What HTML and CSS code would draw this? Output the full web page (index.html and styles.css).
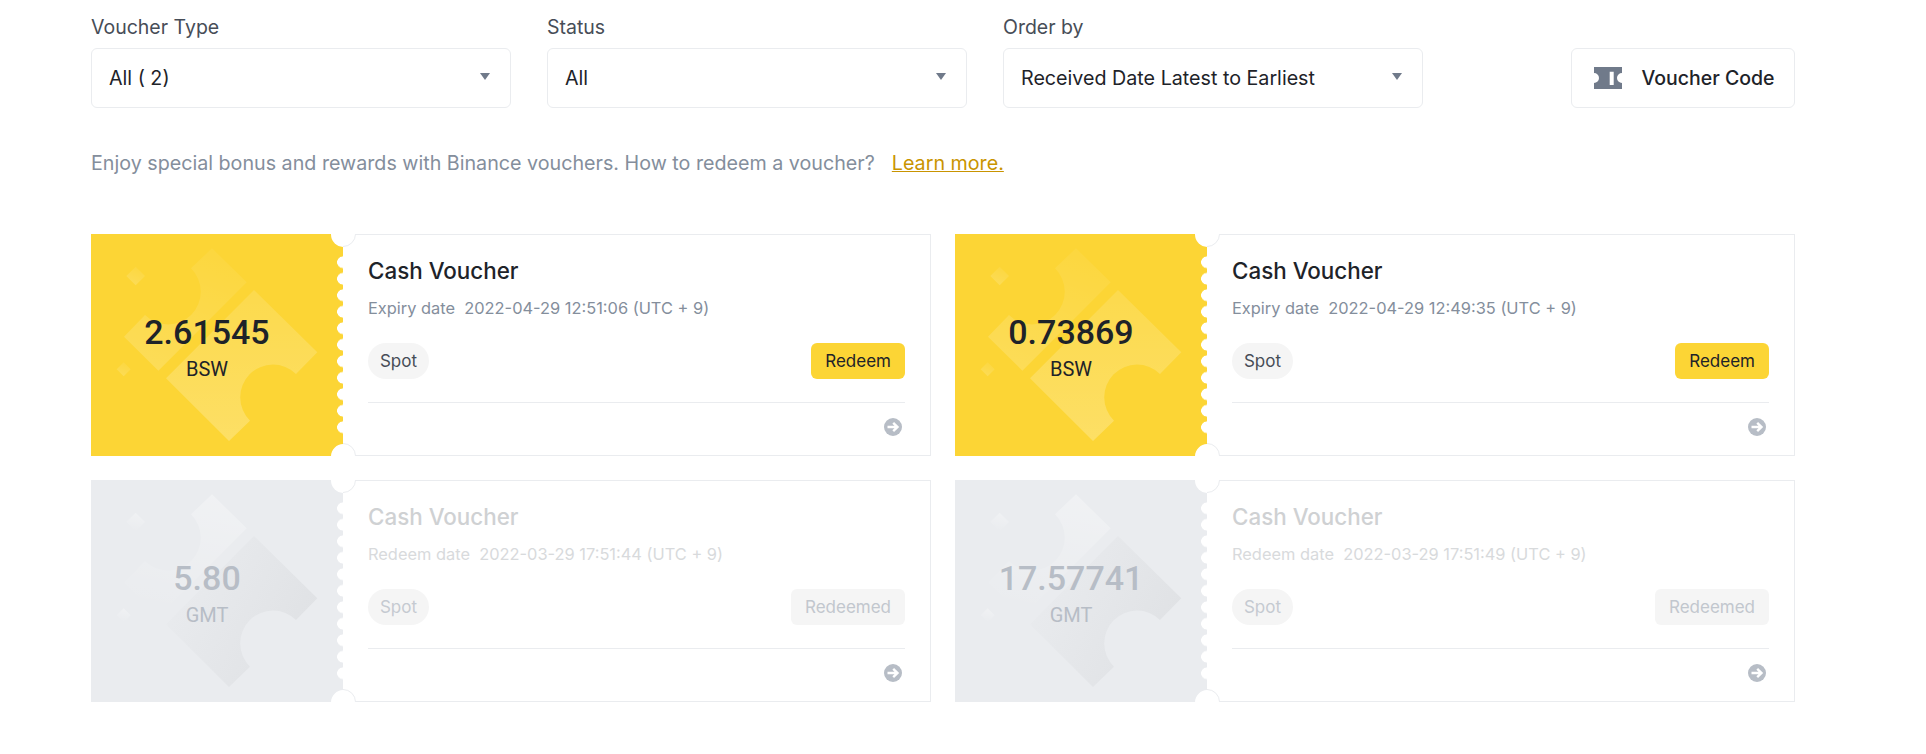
FILE: index.html
```html
<!DOCTYPE html>
<html lang="en">
<head>
<meta charset="utf-8">
<title>Vouchers</title>
<link rel="stylesheet" href="styles.css">
</head>
<body>
<svg class="defs" width="0" height="0" aria-hidden="true">
  <defs>
    <linearGradient id="gold-a" x1="0.7" y1="0" x2="0.3" y2="1"><stop offset="0" stop-color="#fff" stop-opacity=".05"/><stop offset="1" stop-color="#fff" stop-opacity=".17"/></linearGradient>
    <linearGradient id="gold-b" x1="0.5" y1="0" x2="0.5" y2="1"><stop offset="0" stop-color="#fff" stop-opacity=".12"/><stop offset="1" stop-color="#fff" stop-opacity=".24"/></linearGradient>
    <linearGradient id="grey-a" x1="0.7" y1="0" x2="0.5" y2="1"><stop offset="0" stop-color="#fff" stop-opacity=".3"/><stop offset="1" stop-color="#fff" stop-opacity="0"/></linearGradient>
    <linearGradient id="grey-b" x1="0" y1="0.2" x2="1" y2="0.7"><stop offset="0" stop-color="#dfe1e4" stop-opacity="0"/><stop offset="1" stop-color="#dfe1e4" stop-opacity="1"/></linearGradient>
    <symbol id="shapes" viewBox="0 0 252 222">
      <path class="shape-a" d="M121 14.3 L155.700 48.300 L67.400 136.700 L33 102.700 L54 81 A32 32 0 1 0 100 34.300 Z"/>
      <path class="shape-b" d="M163 56 L226.300 118.300 L205 140 A32.400 32.400 0 1 0 159 186.700 L138 207 L75 144.300 Z"/>
      <path class="shape-a" d="M44.700 32.700 L54 42 L44.700 51.300 L35.300 42 Z"/>
      <path class="shape-a" d="M32.700 128.300 L39.700 135.300 L32.700 142.300 L25.700 135.300 Z"/>
    </symbol>
  </defs>
</svg>
<main class="page">
  <section class="filters">
    <div class="field">
      <div class="field-label">Voucher Type</div>
      <div class="select"><span>All ( 2)</span><i class="caret"></i></div>
    </div>
    <div class="field">
      <div class="field-label">Status</div>
      <div class="select"><span>All</span><i class="caret"></i></div>
    </div>
    <div class="field">
      <div class="field-label">Order by</div>
      <div class="select"><span>Received Date Latest to Earliest</span><i class="caret"></i></div>
    </div>
    <button class="code-btn">
      <svg class="code-icon" viewBox="0 0 28 22"><path d="M0 0H28V6A5 5 0 0 0 28 16V22H0V16A5 5 0 0 0 0 6Z M15.700 4.700V18H19.700V4.700Z" fill-rule="evenodd"/></svg>
      <span>Voucher Code</span>
    </button>
  </section>
  <p class="intro">Enjoy special bonus and rewards with Binance vouchers. How to redeem a voucher?<a class="learn" href="#">Learn more.</a></p>
  <section class="grid">
    <article class="card">
      <div class="stub">
        <svg class="stub-art"><use href="#shapes"/></svg>
        <i class="perf"></i><i class="bite bite-t"></i><i class="bite bite-b"></i>
        <div class="amount">2.61545</div><div class="coin">BSW</div>
      </div>
      <div class="body">
        <i class="ring ring-t"></i><i class="ring ring-b"></i>
        <h3 class="title">Cash Voucher</h3>
        <div class="date">Expiry date&nbsp; 2022-04-29 12:51:06 (UTC + 9)</div>
        <div class="row"><span class="pill">Spot</span><button class="action">Redeem</button></div>
        <div class="foot"><svg class="arrow" viewBox="0 0 18 18"><circle cx="9" cy="9" r="9"/><path class="arrow-line" d="M3.500 9H13M9.200 4.800L13.500 9L9.200 13.200"/></svg></div>
      </div>
    </article>
    <article class="card">
      <div class="stub">
        <svg class="stub-art"><use href="#shapes"/></svg>
        <i class="perf"></i><i class="bite bite-t"></i><i class="bite bite-b"></i>
        <div class="amount">0.73869</div><div class="coin">BSW</div>
      </div>
      <div class="body">
        <i class="ring ring-t"></i><i class="ring ring-b"></i>
        <h3 class="title">Cash Voucher</h3>
        <div class="date">Expiry date&nbsp; 2022-04-29 12:49:35 (UTC + 9)</div>
        <div class="row"><span class="pill">Spot</span><button class="action">Redeem</button></div>
        <div class="foot"><svg class="arrow" viewBox="0 0 18 18"><circle cx="9" cy="9" r="9"/><path class="arrow-line" d="M3.500 9H13M9.200 4.800L13.500 9L9.200 13.200"/></svg></div>
      </div>
    </article>
    <article class="card used">
      <div class="stub">
        <svg class="stub-art"><use href="#shapes"/></svg>
        <i class="perf"></i><i class="bite bite-t"></i><i class="bite bite-b"></i>
        <div class="amount">5.80</div><div class="coin">GMT</div>
      </div>
      <div class="body">
        <i class="ring ring-t"></i><i class="ring ring-b"></i>
        <h3 class="title">Cash Voucher</h3>
        <div class="date">Redeem date&nbsp; 2022-03-29 17:51:44 (UTC + 9)</div>
        <div class="row"><span class="pill">Spot</span><button class="action">Redeemed</button></div>
        <div class="foot"><svg class="arrow" viewBox="0 0 18 18"><circle cx="9" cy="9" r="9"/><path class="arrow-line" d="M3.500 9H13M9.200 4.800L13.500 9L9.200 13.200"/></svg></div>
      </div>
    </article>
    <article class="card used">
      <div class="stub">
        <svg class="stub-art"><use href="#shapes"/></svg>
        <i class="perf"></i><i class="bite bite-t"></i><i class="bite bite-b"></i>
        <div class="amount">17.57741</div><div class="coin">GMT</div>
      </div>
      <div class="body">
        <i class="ring ring-t"></i><i class="ring ring-b"></i>
        <h3 class="title">Cash Voucher</h3>
        <div class="date">Redeem date&nbsp; 2022-03-29 17:51:49 (UTC + 9)</div>
        <div class="row"><span class="pill">Spot</span><button class="action">Redeemed</button></div>
        <div class="foot"><svg class="arrow" viewBox="0 0 18 18"><circle cx="9" cy="9" r="9"/><path class="arrow-line" d="M3.500 9H13M9.200 4.800L13.500 9L9.200 13.200"/></svg></div>
      </div>
    </article>
  </section>
</main>
</body>
</html>
```

FILE: styles.css
```css
* { box-sizing: border-box; }
html, body { margin: 0; background: #fff; }
body { font-family: Inter, "Noto Sans", sans-serif; color: #1e2329; overflow: hidden; }
.defs { position: absolute; }
.page { width: 1704px; margin-left: 91px; padding-top: 15px; }

.filters { display: flex; gap: 36px; align-items: flex-end; }
.field { width: 420px; }
.field-label { font-size: 19.500px; line-height: 24px; color: #474d57; margin-bottom: 9px; }
.select { height: 60px; border: 1px solid #eaecef; border-radius: 6px; padding: 0 20px 0 17px; display: flex; align-items: center; justify-content: space-between; font-size: 19.700px; }
.caret { width: 0; height: 0; border-left: 5px solid transparent; border-right: 5px solid transparent; border-top: 7px solid #707a8a; margin-top: -3px; }
.code-btn { margin-left: auto; width: 224px; height: 60px; border: 1px solid #eaecef; border-radius: 6px; background: #fff; display: flex; align-items: center; justify-content: center; gap: 19px; font: 500 19.500px Inter, sans-serif; color: #1e2329; padding: 0 0 0 3px; }
.code-icon { width: 28px; height: 22px; fill: #707a8a; }

.intro { margin: 43px 0 0; font-size: 19.700px; line-height: 24px; color: #848e9c; }
.learn { margin-left: 17px; color: #c99400; text-decoration: underline; }

.grid { margin-top: 59px; display: grid; grid-template-columns: 840px 840px; gap: 24px; }
.card { height: 222px; display: flex; --fill-a: url(#gold-a); --fill-b: url(#gold-b); }
.stub { position: relative; width: 252px; flex: none; background: #fcd535; overflow: hidden; padding: 77px 20px 0 0; text-align: center; color: #1e2329; }
.stub-art { position: absolute; left: 0; top: 0; width: 252px; height: 222px; }
.shape-a { fill: var(--fill-a); }
.shape-b { fill: var(--fill-b); }
.perf { position: absolute; right: 0; top: 20px; width: 6px; height: 182px; background: radial-gradient(circle at 100% 50%, #fff 5.600px, transparent 6.100px) 0 0 / 6px 16.500px repeat-y; }
.bite { position: absolute; right: -12.500px; width: 25px; height: 25px; border-radius: 50%; background: #fff; }
.bite-t { top: -12.500px; }
.bite-b { bottom: -12.500px; }
.amount { position: relative; font: 500 34px/42px Roboto, sans-serif; }
.coin { position: relative; font: 400 20px/26px Roboto, sans-serif; margin-top: 3px; }

.body { position: relative; flex: 1; border: 1px solid #eaecef; border-left: 0; padding: 22px 25px 0 25px; }
.ring { position: absolute; left: -13px; width: 26px; height: 26px; border-radius: 50%; border: 1px solid #eaecef; background: #fff; }
.ring-t { top: -14px; clip-path: inset(50% 0 0 50%); }
.ring-b { bottom: -14px; clip-path: inset(0 0 50% 50%); }
.title { margin: 0; font-size: 22.400px; line-height: 28px; font-weight: 500; color: #1e2329; }
.date { margin-top: 11px; font-size: 16.400px; line-height: 24px; color: #848e9c; }
.row { margin-top: 23px; padding-bottom: 23px; display: flex; justify-content: space-between; align-items: center; border-bottom: 1px solid #eaecef; }
.pill { height: 36px; min-width: 61px; line-height: 36px; text-align: center; border-radius: 18px; background: #f5f5f5; font-size: 17px; color: #474d57; }
.action { height: 36px; padding: 0 14px; border: 0; border-radius: 6px; background: #fcd535; font: 400 17px Inter, sans-serif; color: #1e2329; }
.foot { margin-top: 15px; padding-right: 3px; display: flex; justify-content: flex-end; }
.arrow { width: 18px; height: 18px; fill: #b7bdc6; }
.arrow-line { fill: none; stroke: #fff; stroke-width: 2.400; }

.used { --fill-a: url(#grey-a); --fill-b: url(#grey-b); }
.used .stub { background: #eaecef; color: #b7bdc6; }
.used .title { color: #cfd1d3; }
.used .date { color: #d8dadc; }
.used .pill { color: #c5cad1; }
.used .action { background: #f5f5f5; color: #c2c7ce; }
```
